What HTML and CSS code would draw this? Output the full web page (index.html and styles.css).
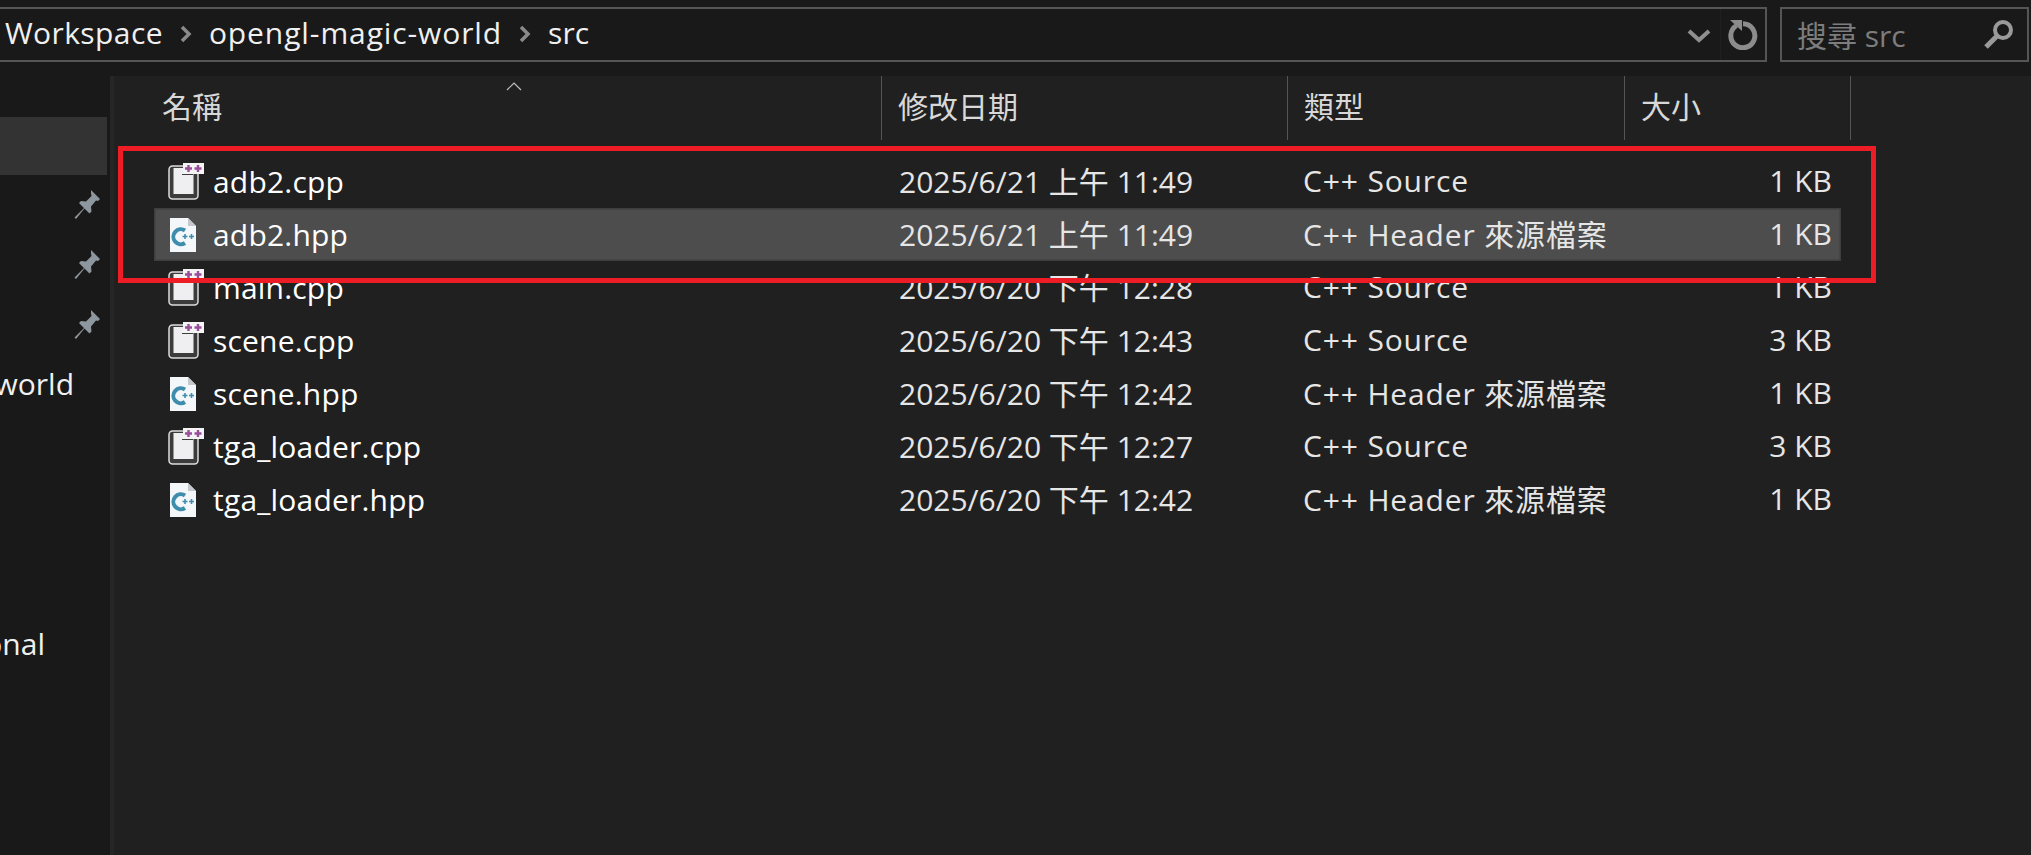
FILE: index.html
```html
<!DOCTYPE html>
<html>
<head>
  <title>src</title>
  <link rel="stylesheet" href="styles.css">
</head>
<body>

<svg class="defs" width="0" height="0">
  <symbol id="cpp" viewBox="0 0 36 38">
    <rect x="1" y="3" width="29" height="33" rx="3.5" fill="#3c3c3c" stroke="#dcdcdc" stroke-width="1.5"/>
    <rect x="5.5" y="5" width="20" height="26" fill="#efeff1"/>
    <rect x="15" y="0" width="21" height="11" fill="#f4f4f4"/>
    <rect x="14" y="11" width="11" height="1" fill="#3c3c3c"/>
    <path d="M17 5.5h7M20.5 2v7M26.5 5.5h7M30 2v7" stroke="#9a4d9a" stroke-width="2.4" fill="none"/>
  </symbol>
  <symbol id="hpp" viewBox="0 0 28 36">
    <path d="M1 1h18l8 8v26H1z" fill="#f4f7f9"/>
    <path d="M19 1v8h8z" fill="#c4c8cc"/>
    <path d="M16 13.5a7.5 7.5 0 1 0 0 12.5" fill="none" stroke="#3f8dad" stroke-width="4"/>
    <path d="M13.500 19.500h5M16 17v5M20 19.500h5M22.500 17v5" fill="none" stroke="#3f8dad" stroke-width="1.600"/>
  </symbol>
  <symbol id="pin" viewBox="0 0 28 32">
    <path d="M17 1l9 9-2 2-2-.5-5 6 .5 5-2 2-5-5-8.500 10.500-1.500-1.500 9.500-9.500-5-5 2-2 5 .5 5.500-5.500-.5-2.500z" fill="#8d979d"/>
  </symbol>
</svg>

<div class="toolbar">
  <div class="address">
    <div class="crumbs">
      <span class="crumb-first">Workspace</span>
      <svg class="crumb-arrow" width="12" height="18" viewBox="0 0 12 18"><path d="M2 2l7 7-7 7" fill="none" stroke="#8a8a8a" stroke-width="3.500"/></svg>
      <span class="crumb-long">opengl-magic-world</span>
      <svg class="crumb-arrow" width="12" height="18" viewBox="0 0 12 18"><path d="M2 2l7 7-7 7" fill="none" stroke="#8a8a8a" stroke-width="3.500"/></svg>
      <span>src</span>
    </div>
    <svg class="dropdown" width="24" height="16" viewBox="0 0 24 16"><path d="M2 3l10 9 10-9" fill="none" stroke="#8f8f8f" stroke-width="4"/></svg>
    <div class="refresh">
      <svg width="30" height="30" viewBox="0 0 30 30"><path d="M8.500 5.500a12 12 0 1 0 6.500-1.800" fill="none" stroke="#8c8c8c" stroke-width="5"/><path d="M2 0h12v11z" fill="#8c8c8c"/></svg>
    </div>
  </div>
  <div class="search">
    <span>搜尋 src</span>
    <svg width="32" height="32" viewBox="0 0 32 32"><circle cx="20" cy="12" r="8" fill="none" stroke="#9a9a9a" stroke-width="4"/><path d="M14 18L3 29" stroke="#9a9a9a" stroke-width="5"/></svg>
  </div>
</div>

<div class="content">
  <div class="sidebar">
    <div class="side-row selected"></div>
    <div class="side-row"><svg class="pin"><use href="#pin"/></svg></div>
    <div class="side-row"><svg class="pin"><use href="#pin"/></svg></div>
    <div class="side-row"><svg class="pin"><use href="#pin"/></svg></div>
    <div class="side-row label">world</div>
    <div class="side-row label last">onal</div>
  </div>

  <div class="main">
    <div class="sort-arrow"><svg width="16" height="9" viewBox="0 0 16 9"><path d="M1 8l7-7 7 7" fill="none" stroke="#c0c0c0" stroke-width="1.200"/></svg></div>
    <div class="header">
      <div class="col name-head">名稱</div>
      <div class="col">修改日期</div>
      <div class="col">類型</div>
      <div class="col">大小</div>
    </div>

    <div class="row">
      <div class="name"><svg class="icon-cpp"><use href="#cpp"/></svg>adb2.cpp</div>
      <div class="date">2025/6/21 上午 11:49</div>
      <div class="type">C++ Source</div>
      <div class="size">1 KB</div>
    </div>
    <div class="row hover">
      <div class="name"><svg class="icon-hpp"><use href="#hpp"/></svg>adb2.hpp</div>
      <div class="date">2025/6/21 上午 11:49</div>
      <div class="type">C++ Header 來源檔案</div>
      <div class="size">1 KB</div>
    </div>
    <div class="row">
      <div class="name"><svg class="icon-cpp"><use href="#cpp"/></svg>main.cpp</div>
      <div class="date">2025/6/20 下午 12:28</div>
      <div class="type">C++ Source</div>
      <div class="size">1 KB</div>
    </div>
    <div class="row">
      <div class="name"><svg class="icon-cpp"><use href="#cpp"/></svg>scene.cpp</div>
      <div class="date">2025/6/20 下午 12:43</div>
      <div class="type">C++ Source</div>
      <div class="size">3 KB</div>
    </div>
    <div class="row">
      <div class="name"><svg class="icon-hpp"><use href="#hpp"/></svg>scene.hpp</div>
      <div class="date">2025/6/20 下午 12:42</div>
      <div class="type">C++ Header 來源檔案</div>
      <div class="size">1 KB</div>
    </div>
    <div class="row">
      <div class="name"><svg class="icon-cpp"><use href="#cpp"/></svg>tga_loader.cpp</div>
      <div class="date">2025/6/20 下午 12:27</div>
      <div class="type">C++ Source</div>
      <div class="size">3 KB</div>
    </div>
    <div class="row">
      <div class="name"><svg class="icon-hpp"><use href="#hpp"/></svg>tga_loader.hpp</div>
      <div class="date">2025/6/20 下午 12:42</div>
      <div class="type">C++ Header 來源檔案</div>
      <div class="size">1 KB</div>
    </div>

    <!-- red annotation box drawn over the list -->
    <div class="callout"></div>
  </div>
</div>

</body>
</html>
```

FILE: styles.css
```css
* {
  box-sizing: border-box;
}

html, body {
  height: 100%;
}

body {
  margin: 0;
  overflow: hidden;
  background: #191919;
  color: #f0f0f0;
  font-family: "Open Sans", "Noto Sans CJK TC", sans-serif;
  font-size: 30px;
  display: flex;
  flex-direction: column;
}

.defs {
  position: absolute;
}

/* top bar */
.toolbar {
  height: 76px;
  flex: none;
  display: flex;
  gap: 13px;
  padding: 7px 2px 0 0;
}

.address, .search {
  height: 55px;
  border: 2px solid #555;
  display: flex;
  align-items: center;
}

.address {
  flex: 1;
  margin-left: -2px;
  border-left: none;
}

.crumbs {
  flex: 1;
  display: flex;
  align-items: center;
  gap: 13px;
  padding-left: 7px;
  padding-bottom: 4px;
  white-space: nowrap;
}

.crumb-first {
  letter-spacing: 0.4px;
}

.crumb-long {
  letter-spacing: 0.9px;
}

.crumb-arrow {
  margin: 3px 4px 0;
}

.dropdown {
  margin: 2px 9px 0 0;
}

.refresh {
  width: 45px;
  height: 100%;
  border-left: 1px solid #202020;
  display: flex;
  align-items: center;
  justify-content: center;
}

.search {
  width: 249px;
  flex: none;
  padding: 0 12px 2px 15px;
  justify-content: space-between;
  color: #7d7d7d;
}

/* left nav */
.content {
  flex: 1;
  display: flex;
  min-height: 0;
}

.sidebar {
  width: 114px;
  flex: none;
  padding-top: 41px;
  border-right: 4px solid #262626;
  background: #191919;
  overflow: hidden;
}

.side-row {
  height: 60px;
  display: flex;
  align-items: center;
  justify-content: flex-end;
  padding-right: 8px;
}

.side-row.selected {
  height: 58px;
  margin-right: 3px;
  background: #333;
}

.side-row.label {
  padding-right: 36px;
  padding-bottom: 3px;
  white-space: nowrap;
}

.side-row.last {
  margin-top: 200px;
  padding-right: 65px;
}

.pin {
  width: 28px;
  height: 32px;
}

/* file list */
.main {
  flex: 1;
  position: relative;
  padding-left: 40px;
  background: #202020;
}

.sort-arrow {
  position: absolute;
  left: 392px;
  top: 4px;
  line-height: 0;
}

.header {
  display: grid;
  grid-template-columns: 728px 406px 337px 226px;
  height: 64px;
  margin-bottom: 15px;
  color: #d8d8d8;
}

.col {
  display: flex;
  align-items: center;
  padding-left: 16px;
  padding-bottom: 6px;
  border-right: 1px solid #555;
}

.name-head {
  padding-left: 8px;
}

.row {
  display: grid;
  grid-template-columns: 745px 404px 337px 201px;
  width: 1687px;
  height: 53px;
  align-items: center;
  white-space: nowrap;
  color: #e6e6e6;
}

.row.hover {
  background: #4d4d4d;
  box-shadow: inset 0 0 0 1.500px #3e3e3e;
}

.name {
  display: flex;
  align-items: center;
  color: #fff;
  padding-left: 14px;
  letter-spacing: 0.2px;
}

.date, .type, .size {
  padding-bottom: 3px;
}

.type {
  letter-spacing: 0.85px;
}

.icon-cpp {
  width: 36px;
  height: 38px;
  margin-right: 9px;
}

.icon-hpp {
  width: 28px;
  height: 36px;
  margin: 0 16px 0 1px;
}

.size {
  text-align: right;
  padding-right: 9px;
}

.callout {
  position: absolute;
  left: 4px;
  top: 70px;
  width: 1758px;
  height: 137px;
  border: 5px solid #ee1c25;
}
```
